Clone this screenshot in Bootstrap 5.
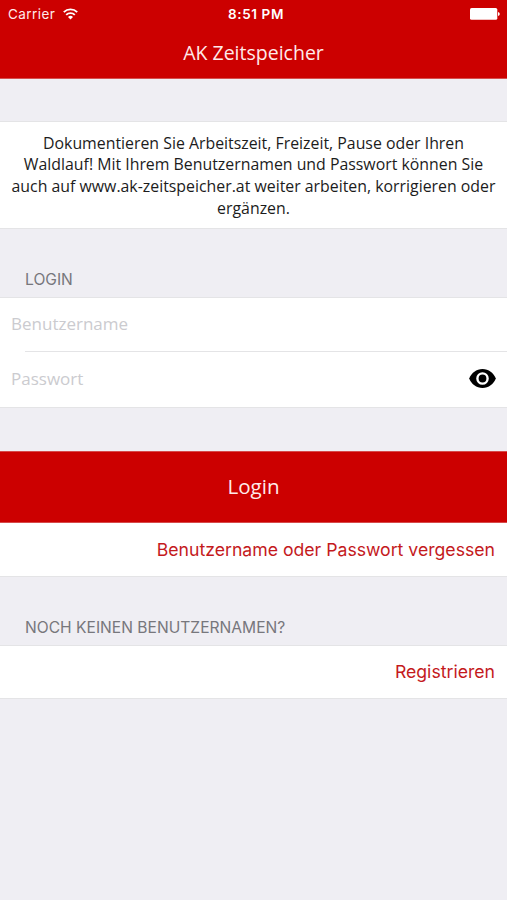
<!DOCTYPE html>
<html lang="de">
<head>
<meta charset="utf-8">
<meta name="viewport" content="width=device-width, initial-scale=1">
<title>AK Zeitspeicher</title>
<link rel="stylesheet" href="https://cdn.jsdelivr.net/npm/bootstrap@5.3.0/dist/css/bootstrap.min.css">
<style>
  :root { --ak-red: #cc0000; --ak-line: #e4e4e6; }
  body { background: #efeef3; font-family: "Open Sans", sans-serif; min-height: 900px; overflow: hidden; }
  .ios { font-family: Inter, sans-serif; }
  .topbar { background: var(--ak-red); height: 79px; color: #ffeaea; border-bottom: 1px solid #d4504f; }
  .statusbar { height: 27px; font-size: 13.5px; line-height: 27px; padding: 0 7px 0 8px; }
  .carrier { letter-spacing: .45px; }
  .clock { font-size: 13.5px; letter-spacing: .6px; color: #fff; padding-left: 4px; line-height: 28px; }
  .app-title { font-size: 19.5px; line-height: 51px; }
  .intro { margin-top: 42px; height: 108px; padding-top: 10.5px; border: solid var(--ak-line); border-width: 1px 0;
    font-size: 15.87px; line-height: 21.75px; color: #1c1c1c; }
  .section-label { height: 68px; padding: 0 0 6px 25px; font-size: 15.6px; line-height: 22px; color: #77777c; }
  .group { border: solid var(--ak-line); border-width: 1px 0; }
  .field { height: 54px; padding: 0 11px 2px; }
  .field-first { height: 53px; padding-bottom: 1px; }
  .field-last { height: 55px; }
  .field input { font-size: 17px; line-height: 24px; background: transparent; }
  .field input::placeholder { color: #cbcbcf; opacity: 1; }
  .inset-line { height: 1px; margin-left: 25px; background: var(--ak-line); }
  .login-btn { height: 72px; margin-top: 43px; padding-bottom: 1px; background: var(--ak-red); color: #ffeaea; font-size: 20.6px;
    border: solid #d64a4a; border-width: 1px 0; }
  .link-row { height: 54px; padding-right: 12px; font-size: 17.65px; border-bottom: 1px solid var(--ak-line); }
  .link-row-plain { padding-top: 2px; }
  .link-row a { color: #c41a1d; }
</style>
<script src="https://cdn.jsdelivr.net/npm/bootstrap@5.3.0/dist/js/bootstrap.bundle.min.js"></script>
</head>
<body class="m-0">
<header class="topbar">
  <div class="statusbar ios row g-0 align-items-center">
    <div class="col d-flex align-items-center">
      <span class="carrier">Carrier</span>
      <svg class="ms-2" width="15" height="12" viewBox="0 0 15 12" fill="none" stroke="#fff" stroke-width="1.9" aria-hidden="true">
        <path d="M.8 4.1a9.6 9.6 0 0 1 13.4 0M3.2 6.9a6.1 6.1 0 0 1 8.6 0"/>
        <path d="M7.5 11.5 5 9a3.5 3.5 0 0 1 5 0z" fill="#fff" stroke="none"/>
      </svg>
    </div>
    <div class="col-auto clock fw-semibold">8:51 PM</div>
    <div class="col d-flex justify-content-end">
      <svg width="30" height="12" viewBox="0 0 30 12" fill="#fff" aria-hidden="true">
        <rect x="0" y="0" width="27.3" height="11.8" rx="1.6"/>
        <path d="M28 3.9q1.8.4 1.8 2t-1.8 2z"/>
      </svg>
    </div>
  </div>
  <h1 class="app-title fw-normal text-center m-0">AK Zeitspeicher</h1>
</header>
<main>
  <p class="intro bg-white text-center text-nowrap mb-0">Dokumentieren Sie Arbeitszeit, Freizeit, Pause oder Ihren<br>Waldlauf! Mit Ihrem Benutzernamen und Passwort können Sie<br>auch auf www.ak-zeitspeicher.at weiter arbeiten, korrigieren oder<br>ergänzen.</p>

  <h2 class="section-label ios fw-normal d-flex align-items-end m-0">LOGIN</h2>
  <div class="group bg-white">
    <div class="field field-first d-flex align-items-center">
      <input class="form-control border-0 p-0 shadow-none" type="text" placeholder="Benutzername" aria-label="Benutzername">
    </div>
    <div class="inset-line"></div>
    <div class="field field-last d-flex align-items-center">
      <input class="form-control border-0 p-0 shadow-none" type="password" placeholder="Passwort" aria-label="Passwort">
      <svg class="flex-shrink-0" width="27" height="19" viewBox="0 0 27 19" aria-hidden="true">
        <path d="M13.5 0C7.4 0 2.3 3.9.2 9.5 2.3 15.1 7.4 19 13.5 19s11.2-3.9 13.3-9.5C24.7 3.9 19.6 0 13.5 0z"/>
        <circle cx="13.5" cy="9.5" r="5.1" fill="none" stroke="#fff" stroke-width="2.4"/>
      </svg>
    </div>
  </div>

  <button class="login-btn btn rounded-0 w-100 d-flex align-items-center justify-content-center px-0 pt-0" type="button">Login</button>
  <div class="link-row link-row-plain ios bg-white d-flex align-items-center justify-content-end">
    <a class="text-decoration-none" href="#">Benutzername oder Passwort vergessen</a>
  </div>

  <h2 class="section-label ios fw-normal d-flex align-items-end m-0">NOCH KEINEN BENUTZERNAMEN?</h2>
  <div class="group link-row ios bg-white d-flex align-items-center justify-content-end">
    <a class="text-decoration-none" href="#">Registrieren</a>
  </div>
</main>
</body>
</html>
